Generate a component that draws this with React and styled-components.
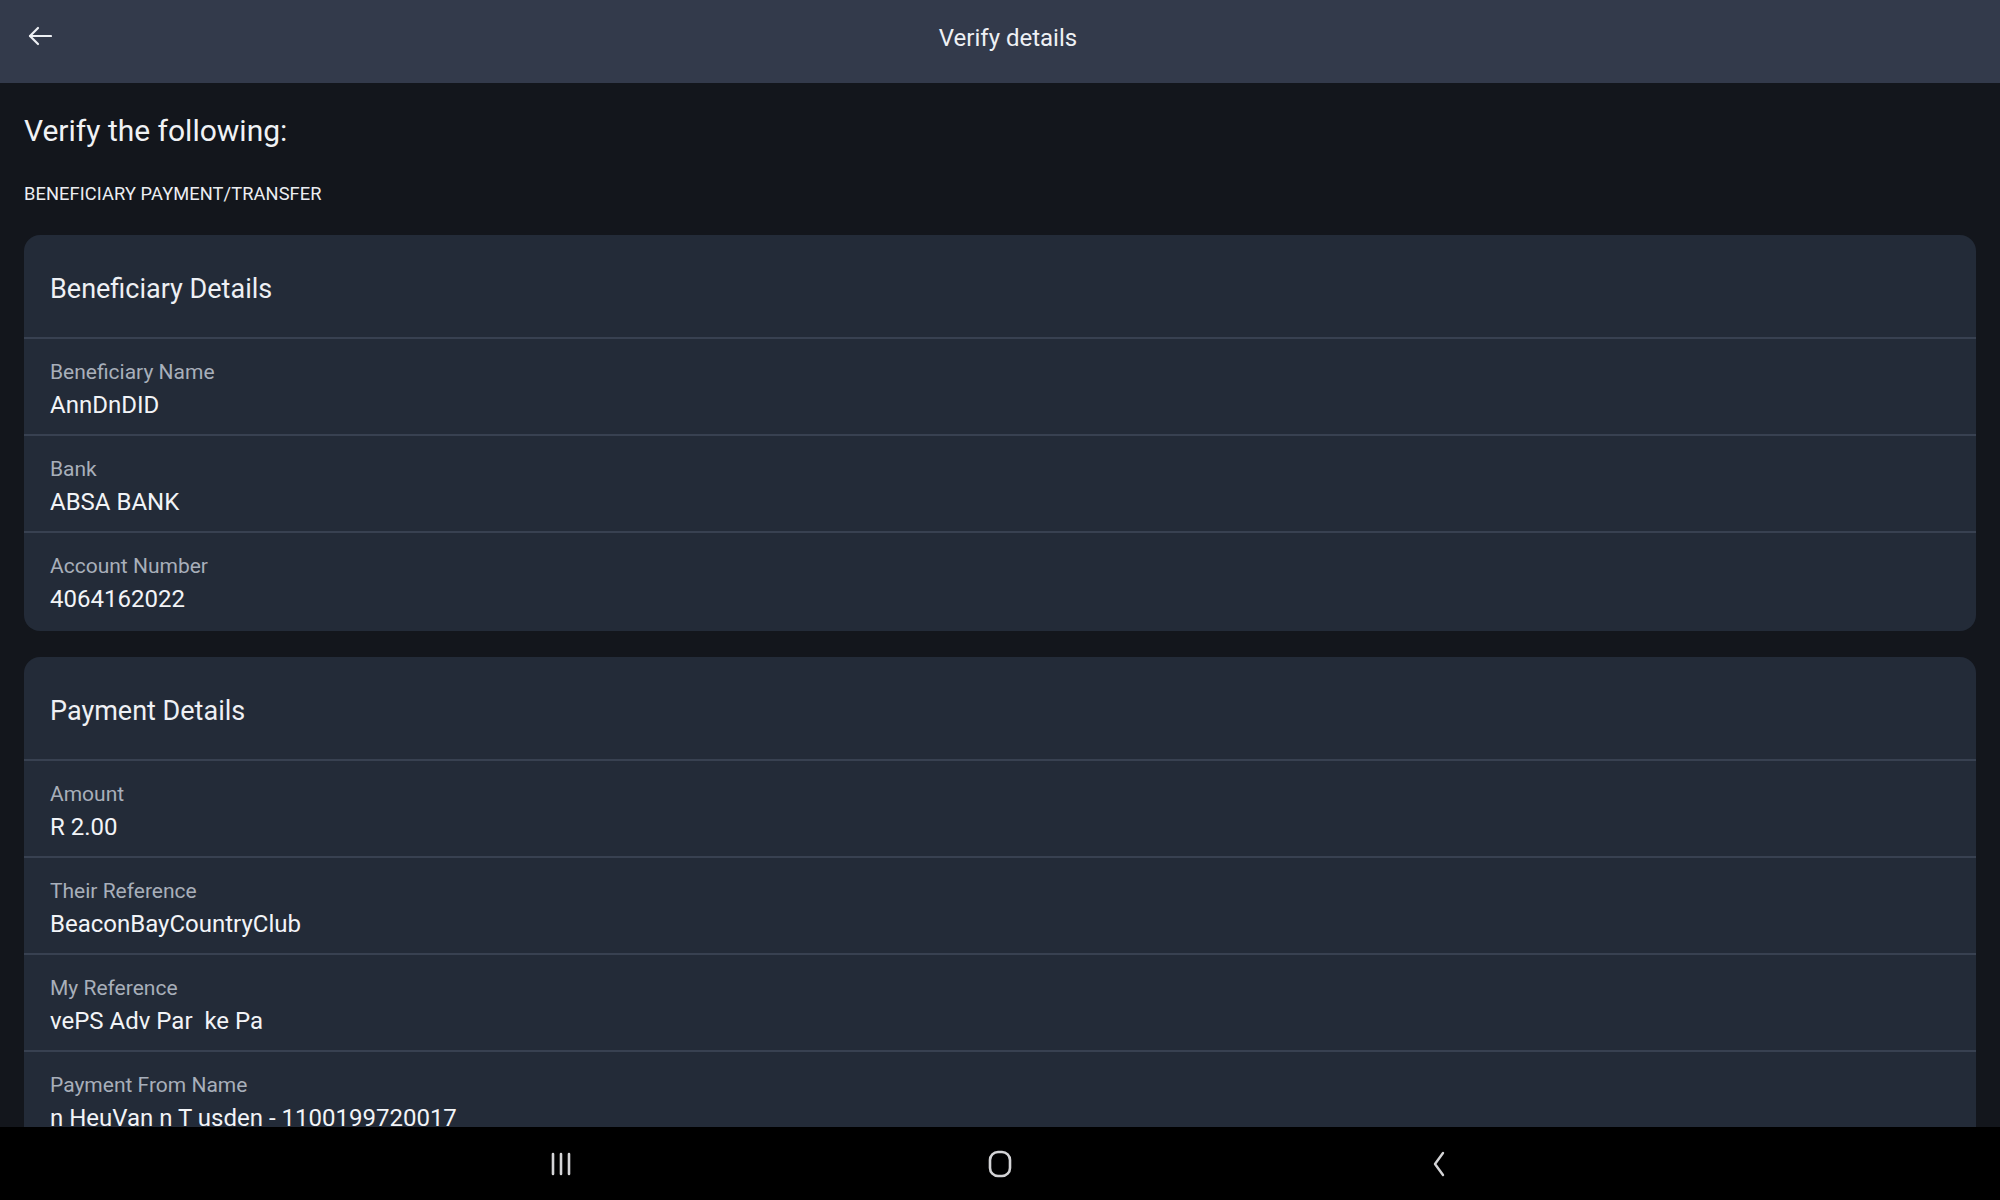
import React from 'react';
import styled, { createGlobalStyle } from 'styled-components';

const GlobalStyle = createGlobalStyle`
  html, body {
    margin: 0;
    padding: 0;
    background: #13161c;
    font-family: Roboto, "Noto Sans", "Liberation Sans", sans-serif;
  }
  * { box-sizing: border-box; }
`;

const Screen = styled.div`
  height: 100vh;
  display: flex;
  flex-direction: column;
  background: #13161c;
  color: #eceef2;
  overflow: hidden;
`;

const TopBar = styled.header`
  flex: 0 0 83px;
  background: #333a4b;
  position: relative;
  display: flex;
  align-items: center;
  justify-content: center;
`;

const BackButton = styled.button`
  position: absolute;
  left: 28px;
  top: 24px;
  width: 30px;
  height: 24px;
  padding: 0;
  border: 0;
  background: none;
  color: #eef0f4;
  display: flex;
  align-items: center;
  cursor: pointer;
`;

const Title = styled.h1`
  margin: -8px 0 0 16px;
  font-size: 24px;
  font-weight: 400;
  color: #eef0f4;
`;

const Content = styled.main`
  flex: 1;
  overflow: hidden;
  padding: 28px 24px 0;
`;

const Heading = styled.h2`
  margin: 0;
  font-size: 30px;
  line-height: 40px;
  font-weight: 400;
  color: #f0f2f5;
`;

const Kind = styled.div`
  margin-top: 31px;
  font-size: 18.25px;
  line-height: 24px;
  color: #eceef2;
  letter-spacing: 0.1px;
`;

const Card = styled.section`
  margin-top: ${p => p.$first ? '29px' : '26px'};
  background: #232b38;
  border-radius: 16px;
  overflow: hidden;
`;

const CardTitle = styled.div`
  height: 104px;
  padding: 5px 26px 0;
  display: flex;
  align-items: center;
  font-size: 27px;
  color: #eef0f4;
  border-bottom: 2px solid #384151;
`;

const Row = styled.div`
  padding: 19px 26px ${p => p.$last ? '17px' : '14px'};
  border-bottom: ${p => p.$last ? 'none' : '2px solid #384151'};
`;

const Label = styled.div`
  font-size: 21px;
  line-height: 28px;
  color: #a8afba;
`;

const Value = styled.div`
  margin-top: 4px;
  font-size: 24px;
  line-height: 30px;
  color: #f2f4f7;
`;

const NavBar = styled.nav`
  flex: 0 0 73px;
  background: #000;
  display: grid;
  grid-template-columns: repeat(3, 1fr);
  align-items: center;
  justify-items: center;
  padding: 0 342px;
`;

const NavIcon = styled.svg`
  display: block;
  color: #d4d4d6;
`;

const beneficiary = [
  ['Beneficiary Name', 'AnnDnDID'],
  ['Bank', 'ABSA BANK'],
  ['Account Number', '4064162022'],
];

const payment = [
  ['Amount', 'R 2.00'],
  ['Their Reference', 'BeaconBayCountryClub'],
  ['My Reference', 'vePS Adv Par\u00a0 ke Pa'],
  ['Payment From Name', 'n HeuVan n T usden - 1100199720017'],
];

function DetailCard({ title, rows, first, last }) {
  return (
    <Card $first={first}>
      <CardTitle>{title}</CardTitle>
      {rows.map(([label, value], i) => (
        <Row key={label} $last={last && i === rows.length - 1}>
          <Label>{label}</Label>
          <Value>{value}</Value>
        </Row>
      ))}
    </Card>
  );
}

export default function App() {
  return (
    <Screen>
      <GlobalStyle />
      <TopBar>
        <BackButton aria-label="Back">
          <svg width="24" height="20" viewBox="0 0 24 20" fill="none" stroke="currentColor" strokeWidth="2.2" strokeLinecap="round" strokeLinejoin="round">
            <path d="M23 10H2" />
            <path d="M10 2L2 10l8 8" />
          </svg>
        </BackButton>
        <Title>Verify details</Title>
      </TopBar>

      <Content>
        <Heading>Verify the following:</Heading>
        <Kind>BENEFICIARY PAYMENT/TRANSFER</Kind>
        <DetailCard title="Beneficiary Details" rows={beneficiary} first last />
        <DetailCard title="Payment Details" rows={payment} />
      </Content>

      <NavBar>
        <NavIcon width="22" height="26" viewBox="0 0 22 26" fill="none" stroke="currentColor" strokeWidth="2.6" strokeLinecap="round">
          <path d="M3 3v20M11 3v20M19 3v20" />
        </NavIcon>
        <NavIcon width="26" height="30" viewBox="0 0 26 30" fill="none" stroke="currentColor" strokeWidth="2.6">
          <rect x="3" y="3" width="20" height="24" rx="8" />
        </NavIcon>
        <NavIcon width="16" height="28" viewBox="0 0 16 28" fill="none" stroke="currentColor" strokeWidth="2.4" strokeLinecap="round" strokeLinejoin="round">
          <path d="M12 3L4 14l8 11" />
        </NavIcon>
      </NavBar>
    </Screen>
  );
}
